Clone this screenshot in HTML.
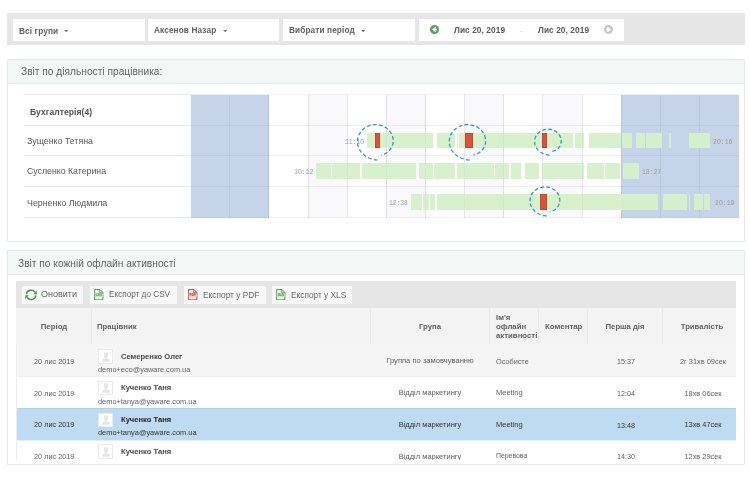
<!DOCTYPE html>
<html><head><meta charset="utf-8"><style>
html,body{margin:0;padding:0;background:#fff;}
body{width:750px;height:485px;position:relative;overflow:hidden;font-family:"Liberation Sans",sans-serif;}
body div, body svg{position:absolute;}
.t{position:absolute;white-space:nowrap;display:block;will-change:transform;}
</style></head><body>
<div style="left:7.00px;top:13.00px;width:738.00px;height:32.00px;background:#e6e6e6;"></div>
<div style="left:13.00px;top:19.00px;width:131.50px;height:22.00px;background:#fff;"></div>
<div style="left:148.00px;top:19.00px;width:131.00px;height:22.00px;background:#fff;"></div>
<div style="left:283.00px;top:19.00px;width:131.60px;height:22.00px;background:#fff;"></div>
<div style="left:419.00px;top:19.00px;width:205.00px;height:22.00px;background:#fff;"></div>
<span class="t" style="left:18.80px;top:27.07px;font-size:8.3px;line-height:8.3px;font-weight:bold;color:#5e5e5e;font-family:'Liberation Sans', sans-serif;letter-spacing:0.1px;">Всі групи</span>
<span class="t" style="left:153.80px;top:27.16px;font-size:8.2px;line-height:8.2px;font-weight:bold;color:#5e5e5e;font-family:'Liberation Sans', sans-serif;letter-spacing:0.15px;">Аксенов Назар</span>
<span class="t" style="left:289.40px;top:27.16px;font-size:8.2px;line-height:8.2px;font-weight:bold;color:#5e5e5e;font-family:'Liberation Sans', sans-serif;letter-spacing:0.15px;">Вибрати період</span>
<svg style="position:absolute;left:64.40px;top:29.6px" width="4.4" height="2.2" viewBox="0 0 4.4 2.2"><path d="M0 0H4.4L2.2 2.2Z" fill="#707070"/></svg>
<svg style="position:absolute;left:222.90px;top:29.6px" width="4.4" height="2.2" viewBox="0 0 4.4 2.2"><path d="M0 0H4.4L2.2 2.2Z" fill="#707070"/></svg>
<svg style="position:absolute;left:361.30px;top:29.6px" width="4.4" height="2.2" viewBox="0 0 4.4 2.2"><path d="M0 0H4.4L2.2 2.2Z" fill="#707070"/></svg>
<svg style="position:absolute;left:429px;top:24.1px" width="11" height="11" viewBox="0 0 11 11"><circle cx="5.5" cy="5.5" r="4.5" fill="#55a05e"/><path d="M6.8 3.2 L4.2 5.5 L6.8 7.8 M4.4 5.5 H8" stroke="#fff" stroke-width="1.5" fill="none"/></svg>
<span class="t" style="left:454.00px;top:26.07px;font-size:8.3px;line-height:8.3px;font-weight:bold;color:#5a5a5a;font-family:'Liberation Sans', sans-serif;letter-spacing:0.08px;">Лис 20, 2019</span>
<span class="t" style="left:520.00px;top:27.07px;font-size:7px;line-height:7px;font-weight:normal;color:#ccc;font-family:'Liberation Sans', sans-serif;">-</span>
<span class="t" style="left:538.00px;top:26.07px;font-size:8.3px;line-height:8.3px;font-weight:bold;color:#5a5a5a;font-family:'Liberation Sans', sans-serif;letter-spacing:0.08px;">Лис 20, 2019</span>
<svg style="position:absolute;left:603px;top:24.3px" width="11" height="11" viewBox="0 0 11 11"><circle cx="5.5" cy="5.5" r="4.5" fill="#c9c9c9"/><path d="M4.2 3.2 L6.8 5.5 L4.2 7.8 M6.6 5.5 H3" stroke="#fff" stroke-width="1.5" fill="none"/></svg>
<div style="left:7.00px;top:59.00px;width:738.00px;height:182.50px;background:#fff;border:1px solid #e6e9e9;box-sizing:border-box;border-radius:1px"></div>
<div style="left:8.00px;top:60.00px;width:736.00px;height:23.00px;background:#f5f7f7;"></div>
<div style="left:8.00px;top:83.00px;width:736.00px;height:1.00px;background:#e6e9e9;"></div>
<span class="t" style="left:20.90px;top:67.27px;font-size:10.2px;line-height:10.2px;font-weight:normal;color:#636363;font-family:'Liberation Sans', sans-serif;">Звіт по діяльності працівника:</span>
<div style="left:190.70px;top:95.00px;width:39.14px;height:123.00px;background:#c6d4ea;"></div>
<div style="left:229.84px;top:95.00px;width:39.14px;height:123.00px;background:#c6d4ea;"></div>
<div style="left:308.11px;top:95.00px;width:39.14px;height:123.00px;background:#f9f9fb;"></div>
<div style="left:386.38px;top:95.00px;width:39.14px;height:123.00px;background:#f9f9fb;"></div>
<div style="left:464.65px;top:95.00px;width:39.14px;height:123.00px;background:#f9f9fb;"></div>
<div style="left:542.92px;top:95.00px;width:39.14px;height:123.00px;background:#f9f9fb;"></div>
<div style="left:621.19px;top:95.00px;width:39.14px;height:123.00px;background:#c6d4ea;"></div>
<div style="left:660.33px;top:95.00px;width:39.14px;height:123.00px;background:#c6d4ea;"></div>
<div style="left:699.46px;top:95.00px;width:39.14px;height:123.00px;background:#c6d4ea;"></div>
<div style="left:24.00px;top:94.00px;width:166.70px;height:1.00px;background:#e9e9e9;"></div>
<div style="left:190.70px;top:94.00px;width:547.90px;height:1.00px;background:rgba(120,120,150,0.10);"></div>
<div style="left:24.00px;top:125.00px;width:166.70px;height:1.00px;background:#e9e9e9;"></div>
<div style="left:190.70px;top:125.00px;width:547.90px;height:1.00px;background:rgba(120,120,150,0.10);"></div>
<div style="left:24.00px;top:155.20px;width:166.70px;height:1.00px;background:#e9e9e9;"></div>
<div style="left:190.70px;top:155.20px;width:547.90px;height:1.00px;background:rgba(120,120,150,0.10);"></div>
<div style="left:24.00px;top:186.00px;width:166.70px;height:1.00px;background:#e9e9e9;"></div>
<div style="left:190.70px;top:186.00px;width:547.90px;height:1.00px;background:rgba(120,120,150,0.10);"></div>
<div style="left:24.00px;top:217.00px;width:166.70px;height:1.00px;background:#e9e9e9;"></div>
<div style="left:190.70px;top:217.00px;width:547.90px;height:1.00px;background:rgba(120,120,150,0.10);"></div>
<div style="left:229.34px;top:95.00px;width:1.00px;height:123.00px;background:rgba(110,110,130,0.11);"></div>
<div style="left:268.47px;top:95.00px;width:1.00px;height:123.00px;background:rgba(110,110,130,0.11);"></div>
<div style="left:307.61px;top:95.00px;width:1.00px;height:123.00px;background:rgba(110,110,130,0.11);"></div>
<div style="left:346.74px;top:95.00px;width:1.00px;height:123.00px;background:rgba(110,110,130,0.11);"></div>
<div style="left:385.88px;top:95.00px;width:1.00px;height:123.00px;background:rgba(110,110,130,0.11);"></div>
<div style="left:425.01px;top:95.00px;width:1.00px;height:123.00px;background:rgba(110,110,130,0.11);"></div>
<div style="left:464.15px;top:95.00px;width:1.00px;height:123.00px;background:rgba(110,110,130,0.11);"></div>
<div style="left:503.29px;top:95.00px;width:1.00px;height:123.00px;background:rgba(110,110,130,0.11);"></div>
<div style="left:542.42px;top:95.00px;width:1.00px;height:123.00px;background:rgba(110,110,130,0.11);"></div>
<div style="left:581.56px;top:95.00px;width:1.00px;height:123.00px;background:rgba(110,110,130,0.11);"></div>
<div style="left:620.69px;top:95.00px;width:1.00px;height:123.00px;background:rgba(110,110,130,0.11);"></div>
<div style="left:659.83px;top:95.00px;width:1.00px;height:123.00px;background:rgba(110,110,130,0.11);"></div>
<div style="left:698.96px;top:95.00px;width:1.00px;height:123.00px;background:rgba(110,110,130,0.11);"></div>
<span class="t" style="left:29.50px;top:107.72px;font-size:8.6px;line-height:8.6px;font-weight:bold;color:#525252;font-family:'Liberation Sans', sans-serif;letter-spacing:0.03px;">Бухгалтерія(4)</span>
<span class="t" style="left:26.80px;top:136.85px;font-size:8.8px;line-height:8.8px;font-weight:normal;color:#555;font-family:'Liberation Sans', sans-serif;">Зущенко Тетяна</span>
<span class="t" style="left:26.80px;top:167.39px;font-size:8.75px;line-height:8.75px;font-weight:normal;color:#555;font-family:'Liberation Sans', sans-serif;">Сусленко Катерина</span>
<span class="t" style="left:26.80px;top:198.71px;font-size:8.85px;line-height:8.85px;font-weight:normal;color:#555;font-family:'Liberation Sans', sans-serif;">Черненко Людмила</span>
<div style="left:366.70px;top:132.90px;width:66.10px;height:15.20px;background:rgba(214,240,202,0.95);"></div>
<div style="left:437.30px;top:132.90px;width:17.70px;height:15.20px;background:rgba(214,240,202,0.95);"></div>
<div style="left:457.00px;top:132.90px;width:0.80px;height:15.20px;background:rgba(214,240,202,0.95);"></div>
<div style="left:458.70px;top:132.90px;width:114.50px;height:15.20px;background:rgba(214,240,202,0.95);"></div>
<div style="left:574.60px;top:132.90px;width:9.40px;height:15.20px;background:rgba(214,240,202,0.95);"></div>
<div style="left:589.00px;top:132.90px;width:31.50px;height:15.20px;background:rgba(214,240,202,0.95);"></div>
<div style="left:621.80px;top:132.90px;width:10.70px;height:15.20px;background:rgba(214,240,202,0.95);"></div>
<div style="left:636.00px;top:132.90px;width:8.70px;height:15.20px;background:rgba(214,240,202,0.95);"></div>
<div style="left:646.40px;top:132.90px;width:15.20px;height:15.20px;background:rgba(214,240,202,0.95);"></div>
<div style="left:668.90px;top:132.90px;width:2.60px;height:15.20px;background:rgba(214,240,202,0.95);"></div>
<div style="left:688.90px;top:132.90px;width:21.30px;height:15.20px;background:rgba(214,240,202,0.95);"></div>
<div style="left:316.00px;top:163.40px;width:14.80px;height:15.40px;background:rgba(214,240,202,0.95);"></div>
<div style="left:332.00px;top:163.40px;width:27.60px;height:15.40px;background:rgba(214,240,202,0.95);"></div>
<div style="left:362.30px;top:163.40px;width:53.60px;height:15.40px;background:rgba(214,240,202,0.95);"></div>
<div style="left:419.30px;top:163.40px;width:13.30px;height:15.40px;background:rgba(214,240,202,0.95);"></div>
<div style="left:434.00px;top:163.40px;width:20.50px;height:15.40px;background:rgba(214,240,202,0.95);"></div>
<div style="left:457.20px;top:163.40px;width:36.80px;height:15.40px;background:rgba(214,240,202,0.95);"></div>
<div style="left:495.30px;top:163.40px;width:13.90px;height:15.40px;background:rgba(214,240,202,0.95);"></div>
<div style="left:511.30px;top:163.40px;width:9.90px;height:15.40px;background:rgba(214,240,202,0.95);"></div>
<div style="left:525.20px;top:163.40px;width:14.10px;height:15.40px;background:rgba(214,240,202,0.95);"></div>
<div style="left:542.00px;top:163.40px;width:42.10px;height:15.40px;background:rgba(214,240,202,0.95);"></div>
<div style="left:587.30px;top:163.40px;width:16.60px;height:15.40px;background:rgba(214,240,202,0.95);"></div>
<div style="left:605.20px;top:163.40px;width:15.20px;height:15.40px;background:rgba(214,240,202,0.95);"></div>
<div style="left:622.50px;top:163.40px;width:16.60px;height:15.40px;background:rgba(214,240,202,0.95);"></div>
<div style="left:411.20px;top:194.00px;width:11.30px;height:15.60px;background:rgba(214,240,202,0.95);"></div>
<div style="left:423.30px;top:194.00px;width:5.40px;height:15.60px;background:rgba(214,240,202,0.95);"></div>
<div style="left:430.00px;top:194.00px;width:4.70px;height:15.60px;background:rgba(214,240,202,0.95);"></div>
<div style="left:436.80px;top:194.00px;width:221.20px;height:15.60px;background:rgba(214,240,202,0.95);"></div>
<div style="left:662.70px;top:194.00px;width:16.00px;height:15.60px;background:rgba(214,240,202,0.95);"></div>
<div style="left:679.30px;top:194.00px;width:8.00px;height:15.60px;background:rgba(214,240,202,0.95);"></div>
<div style="left:688.70px;top:194.00px;width:0.90px;height:15.60px;background:rgba(214,240,202,0.95);"></div>
<div style="left:694.00px;top:194.00px;width:8.70px;height:15.60px;background:rgba(214,240,202,0.95);"></div>
<div style="left:703.70px;top:194.00px;width:6.30px;height:15.60px;background:rgba(214,240,202,0.95);"></div>
<div style="left:268.47px;top:95.00px;width:1.00px;height:123.00px;background:rgba(140,120,140,0.07);"></div>
<div style="left:307.61px;top:95.00px;width:1.00px;height:123.00px;background:rgba(140,120,140,0.07);"></div>
<div style="left:346.74px;top:95.00px;width:1.00px;height:123.00px;background:rgba(140,120,140,0.07);"></div>
<div style="left:385.88px;top:95.00px;width:1.00px;height:123.00px;background:rgba(140,120,140,0.07);"></div>
<div style="left:425.01px;top:95.00px;width:1.00px;height:123.00px;background:rgba(140,120,140,0.07);"></div>
<div style="left:464.15px;top:95.00px;width:1.00px;height:123.00px;background:rgba(140,120,140,0.07);"></div>
<div style="left:503.29px;top:95.00px;width:1.00px;height:123.00px;background:rgba(140,120,140,0.07);"></div>
<div style="left:542.42px;top:95.00px;width:1.00px;height:123.00px;background:rgba(140,120,140,0.07);"></div>
<div style="left:581.56px;top:95.00px;width:1.00px;height:123.00px;background:rgba(140,120,140,0.07);"></div>
<div style="left:374.90px;top:132.90px;width:5.00px;height:15.20px;background:#d8533a;box-shadow:inset 0 0 0 0.5px rgba(150,40,20,0.5)"></div>
<div style="left:465.00px;top:132.90px;width:7.70px;height:15.20px;background:#d8533a;box-shadow:inset 0 0 0 0.5px rgba(150,40,20,0.5)"></div>
<div style="left:542.20px;top:132.90px;width:4.80px;height:15.20px;background:#d8533a;box-shadow:inset 0 0 0 0.5px rgba(150,40,20,0.5)"></div>
<div style="left:540.00px;top:194.00px;width:7.30px;height:15.80px;background:#d8533a;box-shadow:inset 0 0 0 0.5px rgba(150,40,20,0.5)"></div>
<span class="t" style="left:344.60px;top:139.68px;font-size:6.4px;line-height:6.4px;font-weight:normal;color:#9c9c9c;font-family:'Liberation Mono', monospace;">11:1O</span>
<span class="t" style="left:293.60px;top:170.30px;font-size:6.5px;line-height:6.5px;font-weight:normal;color:#9c9c9c;font-family:'Liberation Mono', monospace;">1O:12</span>
<span class="t" style="left:388.50px;top:200.97px;font-size:6.3px;line-height:6.3px;font-weight:normal;color:#9c9c9c;font-family:'Liberation Mono', monospace;">12:38</span>
<span class="t" style="left:712.60px;top:139.60px;font-size:6.5px;line-height:6.5px;font-weight:normal;color:#9c9c9c;font-family:'Liberation Mono', monospace;">2O:16</span>
<span class="t" style="left:641.60px;top:170.28px;font-size:6.4px;line-height:6.4px;font-weight:normal;color:#9c9c9c;font-family:'Liberation Mono', monospace;">18:27</span>
<span class="t" style="left:714.50px;top:200.80px;font-size:6.5px;line-height:6.5px;font-weight:normal;color:#9c9c9c;font-family:'Liberation Mono', monospace;">2O:19</span>
<svg style="position:absolute;left:0;top:0" width="750" height="485"><path d="M377.55 160.03 L376.24 159.95 L374.95 159.80 L373.68 159.58 L372.44 159.29 L371.23 158.93 L370.05 158.51 L368.91 158.03 L367.81 157.49 L366.75 156.89 L365.73 156.24 L364.76 155.53 L363.85 154.78 L362.98 153.98 L362.17 153.13 L361.41 152.25 L360.71 151.32 L360.07 150.36 L359.49 149.37 L358.98 148.35 L358.54 147.29 L358.17 146.21 L357.89 145.11 L357.68 143.99 L357.55 142.86 L357.50 141.73 L357.53 140.60 L357.64 139.47 L357.83 138.35 L358.10 137.24 L358.45 136.16 L358.87 135.10 L359.36 134.06 L359.93 133.07 L360.57 132.10 L361.27 131.19 L362.04 130.31 L362.87 129.49 L363.75 128.72 L364.68 128.01 L365.67 127.36 L366.69 126.77 L367.76 126.25 L368.86 125.80 L369.99 125.42 L371.15 125.10 L372.32 124.87 L373.51 124.70 L374.70 124.62 L375.90 124.60 L377.10 124.67 L378.30 124.81 L379.47 125.02 L380.64 125.31 L381.77 125.67 L382.88 126.10 L383.96 126.60 L385.00 127.16 L386.00 127.79 L386.95 128.48 L387.85 129.23 L388.70 130.04 L389.48 130.90 L390.21 131.80 L390.86 132.75 L391.44 133.74 L391.95 134.77 L392.37 135.83 L392.71 136.91 L392.96 138.01 L393.13 139.13 L393.21 140.25 L393.20 141.37 L393.11 142.48 L392.93 143.58 L392.66 144.65 L392.32 145.71 L391.90 146.73 L391.40 147.71 L390.83 148.65 L390.19 149.54 L389.49 150.38 L388.73 151.16 L387.92 151.89 L387.06 152.54 L386.16 153.13 L385.22 153.65 L384.25 154.10 L383.26 154.47 L382.25 154.77 L381.23 155.00" fill="none" stroke="#3598c2" stroke-width="1.3" stroke-dasharray="3.8 2.3"/><path d="M469.69 160.03 L468.35 159.95 L467.04 159.80 L465.75 159.58 L464.49 159.29 L463.25 158.93 L462.06 158.51 L460.90 158.03 L459.78 157.49 L458.70 156.89 L457.67 156.24 L456.69 155.53 L455.75 154.78 L454.87 153.98 L454.05 153.13 L453.28 152.25 L452.56 151.32 L451.91 150.36 L451.32 149.37 L450.80 148.35 L450.36 147.29 L449.99 146.21 L449.69 145.11 L449.48 143.99 L449.35 142.86 L449.30 141.73 L449.33 140.60 L449.44 139.47 L449.64 138.35 L449.91 137.24 L450.26 136.16 L450.69 135.10 L451.20 134.06 L451.77 133.07 L452.42 132.10 L453.14 131.19 L453.92 130.31 L454.76 129.49 L455.65 128.72 L456.60 128.01 L457.60 127.36 L458.65 126.77 L459.73 126.25 L460.85 125.80 L462.00 125.42 L463.17 125.10 L464.37 124.87 L465.57 124.70 L466.79 124.62 L468.01 124.60 L469.23 124.67 L470.44 124.81 L471.64 125.02 L472.82 125.31 L473.98 125.67 L475.11 126.10 L476.20 126.60 L477.26 127.16 L478.28 127.79 L479.24 128.48 L480.16 129.23 L481.02 130.04 L481.82 130.90 L482.55 131.80 L483.22 132.75 L483.81 133.74 L484.32 134.77 L484.75 135.83 L485.09 136.91 L485.35 138.01 L485.52 139.13 L485.60 140.25 L485.59 141.37 L485.50 142.48 L485.32 143.58 L485.05 144.65 L484.70 145.71 L484.27 146.73 L483.77 147.71 L483.19 148.65 L482.54 149.54 L481.83 150.38 L481.05 151.16 L480.23 151.89 L479.35 152.54 L478.43 153.13 L477.48 153.65 L476.50 154.10 L475.49 154.47 L474.46 154.77 L473.43 155.00" fill="none" stroke="#3598c2" stroke-width="1.3" stroke-dasharray="3.8 2.3"/><path d="M549.53 155.04 L548.55 154.99 L547.59 154.88 L546.64 154.72 L545.72 154.50 L544.82 154.24 L543.94 153.94 L543.09 153.58 L542.27 153.19 L541.48 152.75 L540.73 152.28 L540.01 151.76 L539.32 151.21 L538.68 150.63 L538.07 150.01 L537.51 149.37 L536.99 148.69 L536.51 147.99 L536.08 147.27 L535.70 146.52 L535.37 145.75 L535.10 144.96 L534.89 144.16 L534.73 143.34 L534.64 142.52 L534.60 141.70 L534.62 140.87 L534.71 140.05 L534.85 139.23 L535.05 138.42 L535.30 137.63 L535.62 136.86 L535.99 136.10 L536.41 135.38 L536.89 134.67 L537.41 134.00 L537.98 133.37 L538.59 132.77 L539.25 132.21 L539.95 131.69 L540.68 131.21 L541.44 130.79 L542.24 130.40 L543.06 130.07 L543.90 129.80 L544.76 129.57 L545.63 129.40 L546.52 129.28 L547.41 129.21 L548.30 129.20 L549.19 129.25 L550.08 129.35 L550.96 129.51 L551.82 129.72 L552.67 129.98 L553.50 130.29 L554.30 130.66 L555.07 131.07 L555.82 131.53 L556.53 132.03 L557.20 132.58 L557.82 133.17 L558.41 133.79 L558.95 134.45 L559.44 135.14 L559.87 135.87 L560.24 136.62 L560.56 137.39 L560.81 138.18 L561.00 138.98 L561.12 139.80 L561.18 140.61 L561.18 141.43 L561.11 142.24 L560.97 143.04 L560.78 143.83 L560.52 144.59 L560.21 145.34 L559.84 146.06 L559.41 146.74 L558.94 147.39 L558.42 148.00 L557.85 148.58 L557.25 149.10 L556.61 149.58 L555.93 150.01 L555.23 150.39 L554.51 150.72 L553.78 150.99 L553.02 151.21 L552.27 151.37" fill="none" stroke="#3598c2" stroke-width="1.3" stroke-dasharray="3.8 2.3"/><path d="M546.71 215.87 L545.62 215.81 L544.54 215.68 L543.48 215.50 L542.45 215.26 L541.44 214.97 L540.46 214.63 L539.51 214.23 L538.59 213.79 L537.71 213.30 L536.86 212.77 L536.05 212.19 L535.29 211.58 L534.57 210.92 L533.89 210.23 L533.26 209.51 L532.68 208.75 L532.14 207.97 L531.66 207.15 L531.23 206.32 L530.87 205.45 L530.56 204.57 L530.32 203.67 L530.15 202.76 L530.04 201.83 L530.00 200.91 L530.03 199.98 L530.12 199.06 L530.28 198.14 L530.50 197.24 L530.79 196.35 L531.14 195.48 L531.55 194.64 L532.03 193.82 L532.56 193.04 L533.14 192.28 L533.78 191.57 L534.47 190.90 L535.21 190.27 L535.99 189.69 L536.81 189.16 L537.66 188.68 L538.55 188.25 L539.47 187.88 L540.41 187.57 L541.37 187.31 L542.35 187.12 L543.34 186.99 L544.34 186.91 L545.34 186.90 L546.34 186.96 L547.33 187.07 L548.31 187.24 L549.28 187.48 L550.23 187.77 L551.15 188.12 L552.05 188.53 L552.92 189.00 L553.75 189.51 L554.54 190.08 L555.29 190.69 L556.00 191.35 L556.65 192.05 L557.26 192.79 L557.80 193.56 L558.29 194.38 L558.71 195.22 L559.06 196.08 L559.34 196.97 L559.55 197.87 L559.69 198.78 L559.75 199.69 L559.75 200.61 L559.67 201.52 L559.52 202.42 L559.30 203.30 L559.02 204.16 L558.67 204.99 L558.25 205.79 L557.78 206.56 L557.25 207.29 L556.66 207.98 L556.03 208.62 L555.35 209.21 L554.63 209.75 L553.88 210.23 L553.10 210.65 L552.29 211.02 L551.47 211.33 L550.62 211.57 L549.78 211.75" fill="none" stroke="#3598c2" stroke-width="1.3" stroke-dasharray="3.8 2.3"/></svg>
<div style="left:7.00px;top:250.30px;width:738.00px;height:214.90px;background:#fff;border:1px solid #e6e9e9;box-sizing:border-box"></div>
<div style="left:8.00px;top:251.30px;width:736.00px;height:22.90px;background:#f5f7f7;"></div>
<div style="left:8.00px;top:274.20px;width:736.00px;height:1.00px;background:#e6e9e9;"></div>
<span class="t" style="left:17.60px;top:258.57px;font-size:10.2px;line-height:10.2px;font-weight:normal;color:#636363;font-family:'Liberation Sans', sans-serif;">Звіт по кожній офлайн активності</span>
<div style="left:16.00px;top:280.70px;width:719.50px;height:27.10px;background:#e6e6e6;"></div>
<div style="left:22.00px;top:285.50px;width:61.20px;height:18.00px;background:#f8f8f8;"></div>
<div style="left:90.00px;top:285.50px;width:86.80px;height:18.00px;background:#f8f8f8;"></div>
<div style="left:183.80px;top:285.50px;width:82.10px;height:18.00px;background:#f8f8f8;"></div>
<div style="left:272.00px;top:285.50px;width:79.90px;height:18.00px;background:#f8f8f8;"></div>
<svg style="position:absolute;left:24.1px;top:287.6px" width="14" height="14" viewBox="0 0 14 14"><g fill="none" stroke="#47924c" stroke-width="1.4"><path d="M2.3 6.2 A4.8 4.8 0 0 1 11.0 4.2"/><path d="M11.9 7.4 A4.8 4.8 0 0 1 3.2 9.5"/></g><g fill="#47924c"><path d="M9.2 6.3 L12.8 6.3 L12.8 2.7 Z"/><path d="M4.9 7.3 L1.3 7.3 L1.3 10.9 Z"/></g></svg>
<svg style="position:absolute;left:94.2px;top:288.8px" width="9.5" height="11.5" viewBox="0 0 9.5 11.5"><path d="M0.6 0.6 H6 L8.9 3.5 V10.9 H0.6 Z" fill="#eef8ec" stroke="#3f8f3f" stroke-width="0.9"/><path d="M5.8 0.6 V3.7 H8.9" fill="none" stroke="#3f8f3f" stroke-width="0.8"/><rect x="0.6" y="4.4" width="8.3" height="3.4" fill="#bfe3b8"/><text x="4.75" y="7.3" font-size="3.2" font-family="Liberation Sans" font-weight="bold" fill="#3f8f3f" text-anchor="middle">CSV</text></svg>
<svg style="position:absolute;left:188px;top:288.8px" width="9.5" height="11.5" viewBox="0 0 9.5 11.5"><path d="M0.6 0.6 H6 L8.9 3.5 V10.9 H0.6 Z" fill="#fbefee" stroke="#b0392b" stroke-width="0.9"/><path d="M5.8 0.6 V3.7 H8.9" fill="none" stroke="#b0392b" stroke-width="0.8"/><rect x="0.6" y="4.4" width="8.3" height="3.4" fill="#f0c4bf"/><text x="4.75" y="7.3" font-size="3.2" font-family="Liberation Sans" font-weight="bold" fill="#b0392b" text-anchor="middle">PDF</text></svg>
<svg style="position:absolute;left:276.4px;top:288.8px" width="9.5" height="11.5" viewBox="0 0 9.5 11.5"><path d="M0.6 0.6 H6 L8.9 3.5 V10.9 H0.6 Z" fill="#eef8ec" stroke="#3f8f3f" stroke-width="0.9"/><path d="M5.8 0.6 V3.7 H8.9" fill="none" stroke="#3f8f3f" stroke-width="0.8"/><rect x="0.6" y="4.4" width="8.3" height="3.4" fill="#bfe3b8"/><text x="4.75" y="7.3" font-size="3.2" font-family="Liberation Sans" font-weight="bold" fill="#3f8f3f" text-anchor="middle">XLS</text></svg>
<span class="t" style="left:40.80px;top:290.28px;font-size:9.0px;line-height:9.0px;font-weight:normal;color:#666666;font-family:'Liberation Sans', sans-serif;">Оновити</span>
<span class="t" style="left:108.90px;top:291.06px;font-size:8.2px;line-height:8.2px;font-weight:normal;color:#666666;font-family:'Liberation Sans', sans-serif;">Експорт до CSV</span>
<span class="t" style="left:202.60px;top:290.93px;font-size:8.35px;line-height:8.35px;font-weight:normal;color:#666666;font-family:'Liberation Sans', sans-serif;">Експорт у PDF</span>
<span class="t" style="left:290.80px;top:290.97px;font-size:8.3px;line-height:8.3px;font-weight:normal;color:#666666;font-family:'Liberation Sans', sans-serif;">Експорт у XLS</span>
<div style="left:16.00px;top:307.80px;width:719.50px;height:36.20px;background:#f3f3f3;"></div>
<div style="left:91.10px;top:307.80px;width:1.00px;height:36.20px;background:#e9e9e9;"></div>
<div style="left:370.20px;top:307.80px;width:1.00px;height:36.20px;background:#e9e9e9;"></div>
<div style="left:489.40px;top:307.80px;width:1.00px;height:36.20px;background:#e9e9e9;"></div>
<div style="left:537.70px;top:307.80px;width:1.00px;height:36.20px;background:#e9e9e9;"></div>
<div style="left:587.30px;top:307.80px;width:1.00px;height:36.20px;background:#e9e9e9;"></div>
<div style="left:662.10px;top:307.80px;width:1.00px;height:36.20px;background:#e9e9e9;"></div>
<span class="t" style="left:53.70px;top:322.80px;font-size:7.8px;line-height:7.8px;font-weight:bold;color:#606060;font-family:'Liberation Sans', sans-serif;transform:translateX(-50%);">Період</span>
<span class="t" style="left:97.30px;top:322.84px;font-size:7.75px;line-height:7.75px;font-weight:bold;color:#606060;font-family:'Liberation Sans', sans-serif;">Працівник</span>
<span class="t" style="left:429.75px;top:322.84px;font-size:7.75px;line-height:7.75px;font-weight:bold;color:#606060;font-family:'Liberation Sans', sans-serif;transform:translateX(-50%);">Група</span>
<span class="t" style="left:495.50px;top:314.00px;font-size:7.8px;line-height:7.8px;font-weight:bold;color:#606060;font-family:'Liberation Sans', sans-serif;">Ім'я</span>
<span class="t" style="left:495.50px;top:322.90px;font-size:7.8px;line-height:7.8px;font-weight:bold;color:#606060;font-family:'Liberation Sans', sans-serif;">офлайн</span>
<span class="t" style="left:495.50px;top:331.80px;font-size:7.8px;line-height:7.8px;font-weight:bold;color:#606060;font-family:'Liberation Sans', sans-serif;">активності</span>
<span class="t" style="left:544.60px;top:322.75px;font-size:7.85px;line-height:7.85px;font-weight:bold;color:#606060;font-family:'Liberation Sans', sans-serif;">Коментар</span>
<span class="t" style="left:625.05px;top:322.88px;font-size:7.7px;line-height:7.7px;font-weight:bold;color:#606060;font-family:'Liberation Sans', sans-serif;transform:translateX(-50%);">Перша дія</span>
<span class="t" style="left:702.30px;top:322.88px;font-size:7.7px;line-height:7.7px;font-weight:bold;color:#606060;font-family:'Liberation Sans', sans-serif;transform:translateX(-50%);">Тривалість</span>
<div style="left:16.00px;top:344.00px;width:719.50px;height:32.70px;background:#f5f5f5;"></div>
<div style="left:16.00px;top:376.70px;width:719.50px;height:31.30px;background:#ffffff;"></div>
<div style="left:16.00px;top:408.00px;width:719.50px;height:32.00px;background:#bfdbf2;"></div>
<div style="left:16.00px;top:408.00px;width:719.50px;height:1.00px;background:#b4d0e6;"></div>
<div style="left:16.00px;top:440.00px;width:719.50px;height:19.60px;background:#ffffff;"></div>
<div style="left:16.00px;top:344.00px;width:1.00px;height:115.60px;background:#ececec;"></div>
<div style="left:16.00px;top:376.20px;width:719.50px;height:1.00px;background:#eeeeee;"></div>
<div style="left:16.00px;top:439.50px;width:719.50px;height:1.00px;background:#e9eef2;"></div>
<div style="left:0;top:0;width:750px;height:459.6px;overflow:hidden">
<span class="t" style="left:33.50px;top:357.62px;font-size:7.3px;line-height:7.3px;font-weight:normal;color:#616161;font-family:'Liberation Sans', sans-serif;">20 лис 2019</span>
<div style="left:98.00px;top:349.30px;width:15.00px;height:14.50px;background:#fff;border:1px solid #ebebeb;box-sizing:border-box"></div>
<svg style="position:absolute;left:99.5px;top:350.8px" width="12" height="12" viewBox="0 0 12 12"><path d="M4 1.5 H8 V5.5 Q8 6.5 7 6.8 L7 7.2 Q10 7.8 10 10.8 H2 Q2 7.8 5 7.2 L5 6.8 Q4 6.5 4 5.5 Z" fill="#e6e6e6"/></svg>
<span class="t" style="left:120.60px;top:352.67px;font-size:7.6px;line-height:7.6px;font-weight:bold;color:#484848;font-family:'Liberation Sans', sans-serif;">Семеренко Олег</span>
<span class="t" style="left:97.80px;top:365.74px;font-size:7.4px;line-height:7.4px;font-weight:normal;color:#616161;font-family:'Liberation Sans', sans-serif;">demo+eco@yaware.com.ua</span>
<span class="t" style="left:430.00px;top:357.37px;font-size:7.6px;line-height:7.6px;font-weight:normal;color:#616161;font-family:'Liberation Sans', sans-serif;transform:translateX(-50%);">Группа по замовчуванню</span>
<span class="t" style="left:495.80px;top:357.62px;font-size:7.3px;line-height:7.3px;font-weight:normal;color:#616161;font-family:'Liberation Sans', sans-serif;">Особисте</span>
<span class="t" style="left:625.75px;top:357.71px;font-size:7.2px;line-height:7.2px;font-weight:normal;color:#616161;font-family:'Liberation Sans', sans-serif;transform:translateX(-50%);">15:37</span>
<span class="t" style="left:702.95px;top:357.54px;font-size:7.4px;line-height:7.4px;font-weight:normal;color:#616161;font-family:'Liberation Sans', sans-serif;transform:translateX(-50%);">2г 31хв 09сек</span>
<span class="t" style="left:33.50px;top:389.62px;font-size:7.3px;line-height:7.3px;font-weight:normal;color:#616161;font-family:'Liberation Sans', sans-serif;">20 лис 2019</span>
<div style="left:98.00px;top:380.50px;width:15.00px;height:14.50px;background:#fff;border:1px solid #ebebeb;box-sizing:border-box"></div>
<svg style="position:absolute;left:99.5px;top:382.0px" width="12" height="12" viewBox="0 0 12 12"><path d="M4 1.5 H8 V5.5 Q8 6.5 7 6.8 L7 7.2 Q10 7.8 10 10.8 H2 Q2 7.8 5 7.2 L5 6.8 Q4 6.5 4 5.5 Z" fill="#e6e6e6"/></svg>
<span class="t" style="left:120.60px;top:384.47px;font-size:7.6px;line-height:7.6px;font-weight:bold;color:#484848;font-family:'Liberation Sans', sans-serif;">Кученко Таня</span>
<span class="t" style="left:97.80px;top:397.64px;font-size:7.4px;line-height:7.4px;font-weight:normal;color:#616161;font-family:'Liberation Sans', sans-serif;">demo+tanya@yaware.com.ua</span>
<span class="t" style="left:430.00px;top:389.45px;font-size:7.5px;line-height:7.5px;font-weight:normal;color:#616161;font-family:'Liberation Sans', sans-serif;transform:translateX(-50%);">Відділ маркетингу</span>
<span class="t" style="left:495.80px;top:389.45px;font-size:7.5px;line-height:7.5px;font-weight:normal;color:#616161;font-family:'Liberation Sans', sans-serif;">Meeting</span>
<span class="t" style="left:625.75px;top:389.71px;font-size:7.2px;line-height:7.2px;font-weight:normal;color:#616161;font-family:'Liberation Sans', sans-serif;transform:translateX(-50%);">12:04</span>
<span class="t" style="left:702.50px;top:389.54px;font-size:7.4px;line-height:7.4px;font-weight:normal;color:#616161;font-family:'Liberation Sans', sans-serif;transform:translateX(-50%);">18хв 06сек</span>
<span class="t" style="left:33.50px;top:421.42px;font-size:7.3px;line-height:7.3px;font-weight:normal;color:#333;font-family:'Liberation Sans', sans-serif;">20 лис 2019</span>
<div style="left:98.00px;top:412.60px;width:15.00px;height:14.50px;background:#fff;border:1px solid #ebebeb;box-sizing:border-box"></div>
<svg style="position:absolute;left:99.5px;top:414.1px" width="12" height="12" viewBox="0 0 12 12"><path d="M4 1.5 H8 V5.5 Q8 6.5 7 6.8 L7 7.2 Q10 7.8 10 10.8 H2 Q2 7.8 5 7.2 L5 6.8 Q4 6.5 4 5.5 Z" fill="#e6e6e6"/></svg>
<span class="t" style="left:120.60px;top:415.97px;font-size:7.6px;line-height:7.6px;font-weight:bold;color:#222;font-family:'Liberation Sans', sans-serif;">Кученко Таня</span>
<span class="t" style="left:97.80px;top:429.34px;font-size:7.4px;line-height:7.4px;font-weight:normal;color:#333;font-family:'Liberation Sans', sans-serif;">demo+tanya@yaware.com.ua</span>
<span class="t" style="left:430.00px;top:421.25px;font-size:7.5px;line-height:7.5px;font-weight:normal;color:#333;font-family:'Liberation Sans', sans-serif;transform:translateX(-50%);">Відділ маркетингу</span>
<span class="t" style="left:495.80px;top:421.25px;font-size:7.5px;line-height:7.5px;font-weight:normal;color:#333;font-family:'Liberation Sans', sans-serif;">Meeting</span>
<span class="t" style="left:625.75px;top:421.51px;font-size:7.2px;line-height:7.2px;font-weight:normal;color:#333;font-family:'Liberation Sans', sans-serif;transform:translateX(-50%);">13:48</span>
<span class="t" style="left:702.50px;top:421.34px;font-size:7.4px;line-height:7.4px;font-weight:normal;color:#333;font-family:'Liberation Sans', sans-serif;transform:translateX(-50%);">13хв 47сек</span>
<span class="t" style="left:33.50px;top:453.12px;font-size:7.3px;line-height:7.3px;font-weight:normal;color:#616161;font-family:'Liberation Sans', sans-serif;">20 лис 2019</span>
<div style="left:98.00px;top:444.20px;width:15.00px;height:14.50px;background:#fff;border:1px solid #ebebeb;box-sizing:border-box"></div>
<svg style="position:absolute;left:99.5px;top:445.7px" width="12" height="12" viewBox="0 0 12 12"><path d="M4 1.5 H8 V5.5 Q8 6.5 7 6.8 L7 7.2 Q10 7.8 10 10.8 H2 Q2 7.8 5 7.2 L5 6.8 Q4 6.5 4 5.5 Z" fill="#e6e6e6"/></svg>
<span class="t" style="left:120.60px;top:447.77px;font-size:7.6px;line-height:7.6px;font-weight:bold;color:#484848;font-family:'Liberation Sans', sans-serif;">Кученко Таня</span>
<span class="t" style="left:97.80px;top:461.74px;font-size:7.4px;line-height:7.4px;font-weight:normal;color:#616161;font-family:'Liberation Sans', sans-serif;">demo+tanya@yaware.com.ua</span>
<span class="t" style="left:430.00px;top:452.95px;font-size:7.5px;line-height:7.5px;font-weight:normal;color:#616161;font-family:'Liberation Sans', sans-serif;transform:translateX(-50%);">Відділ маркетингу</span>
<span class="t" style="left:495.80px;top:453.46px;font-size:6.9px;line-height:6.9px;font-weight:normal;color:#616161;font-family:'Liberation Sans', sans-serif;">Перевова</span>
<span class="t" style="left:625.75px;top:453.21px;font-size:7.2px;line-height:7.2px;font-weight:normal;color:#616161;font-family:'Liberation Sans', sans-serif;transform:translateX(-50%);">14:30</span>
<span class="t" style="left:702.50px;top:453.04px;font-size:7.4px;line-height:7.4px;font-weight:normal;color:#616161;font-family:'Liberation Sans', sans-serif;transform:translateX(-50%);">12хв 29сек</span>
</div>
</body></html>
